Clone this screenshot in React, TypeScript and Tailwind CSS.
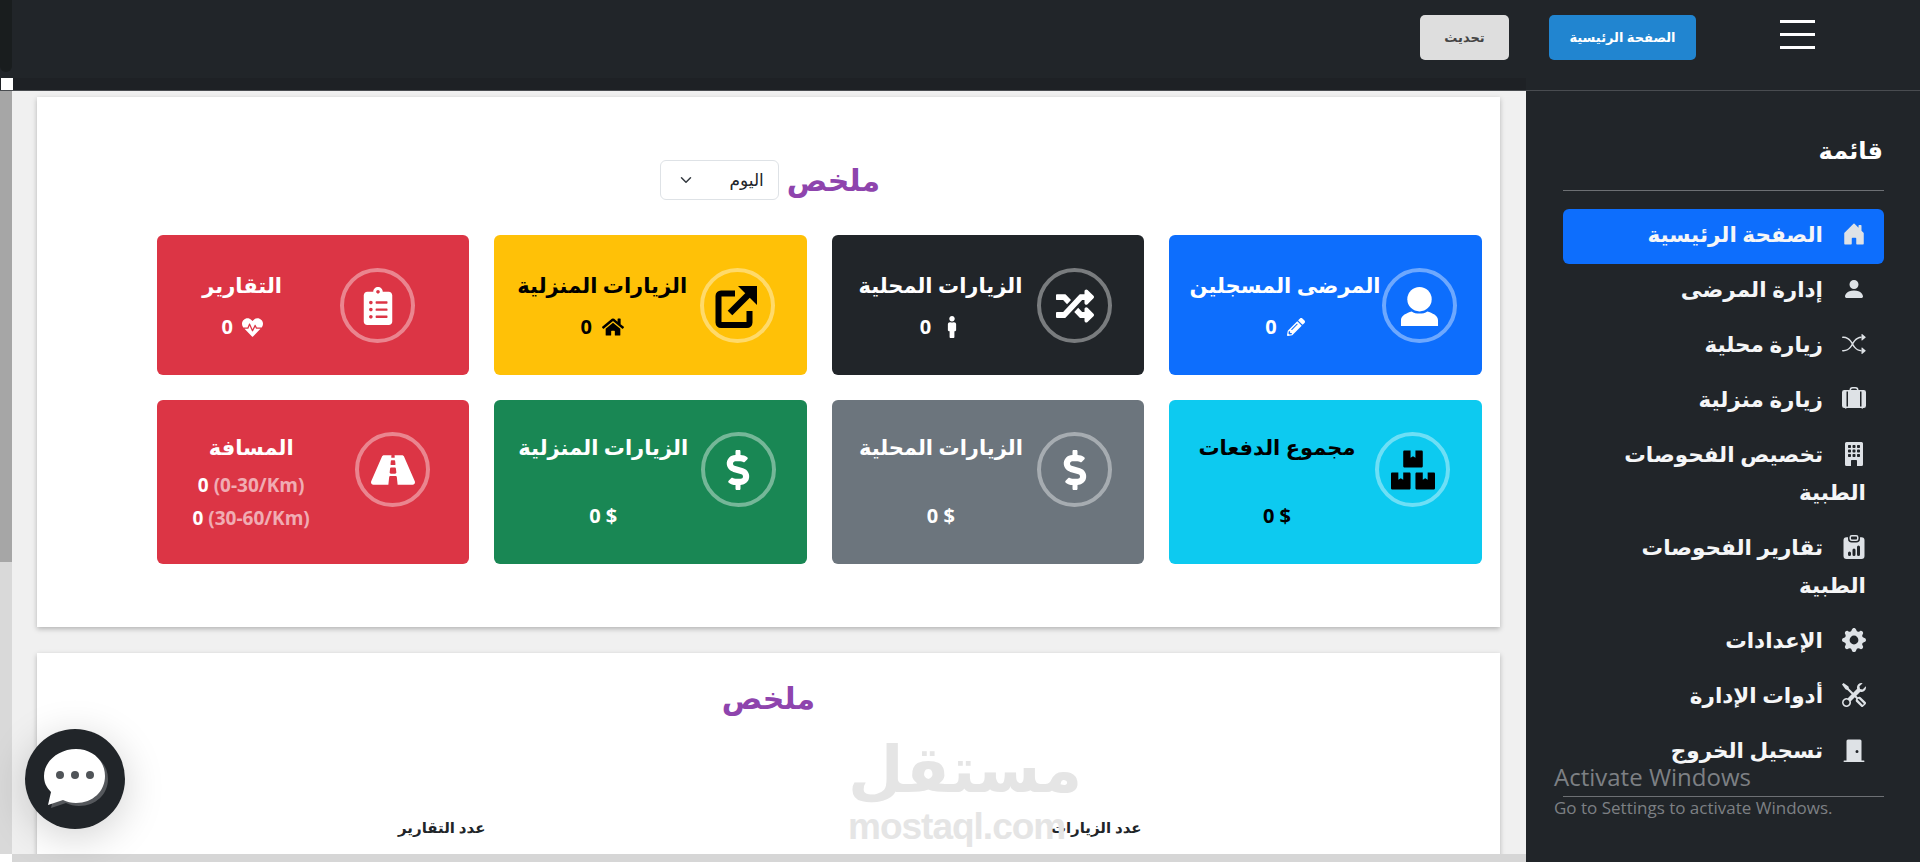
import React from "react";
import { FaHome, FaRandom, FaClipboardList, FaHeartbeat, FaDollarSign, FaBoxes, FaRoad, FaPencilAlt, FaMale } from "react-icons/fa";
import { BsPersonFill, BsShuffle, BsSuitcaseLgFill, BsBuildingFill, BsClipboardDataFill, BsGearFill, BsTools, BsDoorClosedFill, BsHouseDoorFill } from "react-icons/bs";
import { LuChevronDown } from "react-icons/lu";

const FONT = "font-['Noto_Sans','DejaVu_Sans',sans-serif]";

function OpenSquare({ className }: { className?: string }) {
  return (
    <svg viewBox="0 0 44 44" className={className} fill="none" stroke="currentColor">
      <path d="M20 9.500H6a2.500 2.500 0 0 0-2.500 2.500v26.500A2.500 2.500 0 0 0 6 41h26a2.500 2.500 0 0 0 2.500-2.500V27" strokeWidth="6" />
      <path d="M15 29 35 9" strokeWidth="6.500" />
      <path d="M23 2h19v19z" fill="currentColor" stroke="none" />
    </svg>
  );
}

function Bust({ className }: { className?: string }) {
  return (
    <svg viewBox="0 0 40 40" className={className} fill="currentColor">
      <ellipse cx="20" cy="12.500" rx="12.500" ry="12.500" />
      <path d="M1 40v-6c0-5 6-7.500 11-9 4 3 12 3 16 0 5 1.500 11 4 11 9v6z" />
    </svg>
  );
}

type Stat = {
  bg: string; text: string; ring: string; pad: string; w: string; tall?: boolean;
  title: string; icon: React.ReactNode; sub: React.ReactNode;
};

const stats: Stat[] = [
  { bg: "bg-[#0d6efd]", text: "text-white", ring: "border-white/40", pad: "pr-[25px]", w: "w-[192px] mr-[1px]", title: "المرضى المسجلين",
    icon: <Bust className="w-[39px] h-[39px] mt-[2px]" />, sub: <div className="flex items-center justify-center gap-[10px] mt-[12px] text-[20px] leading-[28px] font-bold"><FaPencilAlt className="w-[18px] h-[18px]" /><span>0</span></div> },
  { bg: "bg-[#212529]", text: "text-white", ring: "border-white/40", pad: "pr-[32px]", w: "w-[162px] mr-[16px]", title: "الزيارات المحلية",
    icon: <FaRandom className="w-[38px] h-[38px]" />, sub: <div className="flex items-center justify-center gap-[12px] mt-[12px] text-[20px] leading-[28px] font-bold"><FaMale className="w-[18px] h-[22px]" /><span>0</span></div> },
  { bg: "bg-[#ffc107]", text: "text-black", ring: "border-white/40", pad: "pr-[32px]", w: "w-[165px] mr-[15px]", title: "الزيارات المنزلية",
    icon: <OpenSquare className="w-[44px] h-[44px]" />, sub: <div className="flex items-center justify-center gap-[10px] mt-[12px] text-[20px] leading-[28px] font-bold"><FaHome className="w-[22px] h-[22px]" /><span>0</span></div> },
  { bg: "bg-[#dc3545]", text: "text-white", ring: "border-white/40", pad: "pr-[54px]", w: "w-[76px] mr-[60px]", title: "التقارير",
    icon: <FaClipboardList className="w-[30px] h-[38px]" />, sub: <div className="flex items-center justify-center gap-[9px] mt-[12px] text-[20px] leading-[28px] font-bold"><FaHeartbeat className="w-[21px] h-[21px]" /><span>0</span></div> },
  { bg: "bg-[#0dcaf0]", text: "text-black", ring: "border-white/40", pad: "pr-[32px]", tall: true, w: "w-[166px] mr-[15px]", title: "مجموع الدفعات",
    icon: <FaBoxes className="w-[44px] h-[44px]" />, sub: <div className="mt-[39px] text-[20px] leading-[28px] font-bold text-center" dir="ltr">0 $</div> },
  { bg: "bg-[#6c757d]", text: "text-white", ring: "border-white/40", pad: "pr-[32px]", tall: true, w: "w-[163px] mr-[15px]", title: "الزيارات المحلية",
    icon: <FaDollarSign className="w-[36px] h-[40px]" />, sub: <div className="mt-[39px] text-[20px] leading-[28px] font-bold text-center" dir="ltr">0 $</div> },
  { bg: "bg-[#198754]", text: "text-white", ring: "border-white/40", pad: "pr-[31px]", tall: true, w: "w-[165px] mr-[15px]", title: "الزيارات المنزلية",
    icon: <FaDollarSign className="w-[36px] h-[40px]" />, sub: <div className="mt-[39px] text-[20px] leading-[28px] font-bold text-center" dir="ltr">0 $</div> },
  { bg: "bg-[#dc3545]", text: "text-white", ring: "border-white/40", pad: "pr-[39px]", tall: true, w: "w-[132px] mr-[38px]", title: "المسافة",
    icon: <FaRoad className="w-[44px] h-[44px]" />, sub: (
      <div className="mt-[6px] text-[19px] leading-[33px] font-bold text-center font-['Open_Sans',sans-serif]" dir="ltr">
        <div className="whitespace-nowrap"><span>0 </span><span className="text-white/60">(0-30/Km)</span></div>
        <div className="whitespace-nowrap"><span>0 </span><span className="text-white/60">(30-60/Km)</span></div>
      </div>
    ) },
];

function StatCard({ s }: { s: Stat }) {
  return (
    <div className={`${s.bg} ${s.text} ${s.pad} ${s.tall ? "h-[164px] pt-[32px]" : "h-[140px] pt-[33px]"} rounded-[6px] flex items-start`}>
      <div className={`w-[75px] h-[75px] shrink-0 rounded-full border-[4px] ${s.ring} flex items-center justify-center`}>{s.icon}</div>
      <div className={`${s.w} shrink-0 text-center ${s.tall ? "-mt-[1px]" : "pt-[1px]"}`}>
        <div className="text-[21px] leading-[32px] font-bold whitespace-nowrap flex justify-center">{s.title}</div>
        {s.sub}
      </div>
    </div>
  );
}

const nav: { label: React.ReactNode; icon: React.ReactNode; active?: boolean }[] = [
  { label: "الصفحة الرئيسية", icon: <BsHouseDoorFill className="w-[24px] h-[24px]" />, active: true },
  { label: "إدارة المرضى", icon: <BsPersonFill className="w-[26px] h-[26px]" /> },
  { label: "زيارة محلية", icon: <BsShuffle className="w-[26px] h-[26px]" /> },
  { label: "زيارة منزلية", icon: <BsSuitcaseLgFill className="w-[26px] h-[26px]" /> },
  { label: <>تخصيص الفحوصات<br />الطبية</>, icon: <BsBuildingFill className="w-[26px] h-[26px]" /> },
  { label: <>تقارير الفحوصات<br />الطبية</>, icon: <BsClipboardDataFill className="w-[26px] h-[26px]" /> },
  { label: "الإعدادات", icon: <BsGearFill className="w-[26px] h-[26px]" /> },
  { label: "أدوات الإدارة", icon: <BsTools className="w-[26px] h-[26px]" /> },
  { label: "تسجيل الخروج", icon: <BsDoorClosedFill className="w-[26px] h-[26px]" /> },
];

export default function App() {
  return (
    <div dir="rtl" className={`${FONT} relative w-[1920px] h-[862px] overflow-hidden bg-[#f0f0f0] flex flex-col`}>
      {/* top bar */}
      <header className="h-[91px] shrink-0 bg-[#212529] border-b border-[#494c50] flex items-start pr-[105px] pt-[15px]">
        <div className="w-[35px] mt-[5px] flex flex-col gap-[10px]">
          <span className="block h-[3px] bg-white" /><span className="block h-[3px] bg-white" /><span className="block h-[3px] bg-white" />
        </div>
        <button className="mr-[84px] w-[147px] h-[45px] rounded-[5px] bg-[#2185d0] text-white text-[13px] font-bold">الصفحة الرئيسية</button>
        <button className="mr-[40px] w-[89px] h-[45px] rounded-[5px] bg-[#dedede] text-[#444] text-[13px] font-bold">تحديث</button>
      </header>

      <div className="flex-1 min-h-0 flex">
        {/* sidebar */}
        <aside className="w-[394px] shrink-0 bg-[#212529] text-white relative pr-[36px] pl-[37px] pt-[42px]">
          <div className="text-[24px] leading-[33px] font-bold pr-[1px] h-[57px]">قائمة</div>
          <div className="border-t border-[#6d7074]" />
          <nav className="mt-[18px] flex flex-col">
            {nav.map((n, i) => (
              <a key={i} className={`block rounded-[6px] px-[18px] pt-[6px] pb-[11px] text-[21.5px] leading-[38px] font-bold text-[#f5f6f7] ${n.active ? "bg-[#0d6efd]" : ""}`}>
                <span className="inline-flex w-[24px] h-[38px] items-center justify-center align-top ml-[19px] text-[#dee2e6]">{n.icon}</span>
                {n.label}
              </a>
            ))}
          </nav>
          <div className="absolute top-[705px] left-[37px] right-[36px] border-t border-[#6d7074]" />
          <div dir="ltr" className="absolute top-[670px] left-[28px] font-['Open_Sans',sans-serif] text-[#7d8084]">
            <div className="text-[24px] leading-[32px]">Activate Windows</div>
            <div className="text-[17px] leading-[22px] mt-[4px]">Go to Settings to activate Windows.</div>
          </div>
        </aside>

        {/* main */}
        <main className="flex-1 min-w-0 flex flex-col">
          <div className="flex-1 min-h-0 overflow-hidden pt-[6px] pr-[26px] pl-[25px]">
            <section className="h-[530px] bg-white shadow-[0_2px_5px_rgba(0,0,0,0.25)]">
              <div className="pt-[63px] pl-[3px] flex justify-center gap-[8px] items-center h-[103px]">
                <h2 className="text-[30px] leading-[40px] font-bold text-[#8e44ad]">ملخص</h2>
                <div className="w-[119px] h-[40px] rounded-[6px] border border-[#dee2e6] bg-white flex items-center justify-between pr-[14px] pl-[16px] text-[17px] text-[#212529]">
                  <span>اليوم</span>
                  <LuChevronDown className="w-[18px] h-[18px] text-[#343a40]" />
                </div>
              </div>
              <div className="mt-[35px] pr-[18px] pl-[119.5px] grid grid-cols-4 gap-[25px]">
                {stats.map((s, i) => <StatCard key={i} s={s} />)}
              </div>
            </section>
            <section className="relative mt-[26px] h-[300px] bg-white shadow-[0_2px_5px_rgba(0,0,0,0.25)]">
              <h2 className="pt-[25px] text-center text-[30px] leading-[40px] font-bold text-[#8e44ad]">ملخص</h2>
              <div className="mt-[98px] grid grid-cols-2 text-center text-[15px] leading-[22px] font-bold text-[#212529]">
                <div className="pr-[76px]">عدد الزيارات</div>
                <div className="pl-[78px]">عدد التقارير</div>
              </div>
            </section>
          </div>
          <div className="h-[8px] shrink-0 bg-[#d6d6d6]" />
        </main>

        {/* page scrollbar */}
        <div className="w-[12px] shrink-0 flex flex-col bg-[#d9d9d9]">
          <div className="h-[471px] bg-[#a6a6a6]" />
          <div className="flex-1" />
          <div className="h-[8px] bg-white" />
        </div>
      </div>

      {/* scrollbar remnants over the top bar */}
      <div className="absolute left-0 top-[78px] w-[1526px] h-[12px] bg-[#1e2125]" />
      <div className="absolute left-0 top-0 w-[12px] h-[72px] rounded-b-[6px] bg-[#191d1e]" />
      <div className="absolute left-[1px] top-[78px] w-[12px] h-[12px] bg-white" />

      {/* watermark */}
      <div dir="ltr" className="absolute left-[848px] top-[728px] w-[224px] text-[#e5e5e5] pointer-events-none">
        <div className="text-[64px] leading-[80px] font-bold text-center">مستقل</div>
        <div className="font-['Liberation_Sans',sans-serif] text-[37px] leading-[42px] tracking-[-1px] font-bold -mt-[2px]">mostaql.com</div>
      </div>

      {/* chat bubble */}
      <div className="absolute left-[25px] top-[729px] w-[100px] h-[100px] rounded-full bg-[#212529] shadow-[0_8px_40px_rgba(0,0,0,0.18)] flex items-center justify-center">
        <svg viewBox="0 0 70 64" className="w-[70px] h-[64px] ml-[3px] mt-[2px]">
          <path d="M37 4c17 0 29 12 29 27S54 58 37 58c-5 0-9-1-13-3L9 60l3-13C7 42 5 37 5 31 5 16 19 4 37 4z" fill="#55585c" />
          <path d="M34 1c17 0 29 12 29 27S51 55 34 55c-5 0-9-1-13-3L6 57l3-13C4 39 2 34 2 28 2 13 17 1 34 1z" fill="#fff" />
          <circle cx="18" cy="27" r="4" fill="#505458" /><circle cx="33" cy="27" r="4" fill="#505458" /><circle cx="48" cy="27" r="4" fill="#505458" />
        </svg>
      </div>
    </div>
  );
}
